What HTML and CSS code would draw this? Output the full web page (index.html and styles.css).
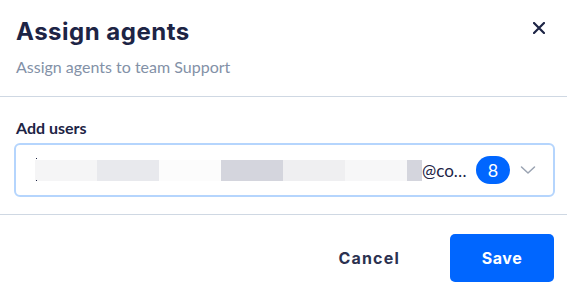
FILE: index.html
```html
<!DOCTYPE html>
<html>
<head>
<meta charset="utf-8">
<link rel="stylesheet" href="styles.css">
</head>
<body>
<div class="modal">
  <div class="header">
    <div class="titles">
      <h1 class="title">Assign agents</h1>
      <p class="subtitle">Assign agents to team Support</p>
    </div>
    <button class="close" aria-label="Close">
      <svg width="12" height="12" viewBox="0 0 12 12"><path d="M1 1 L11 11 M11 1 L1 11" stroke="#1d2445" stroke-width="2.2" stroke-linecap="round"/></svg>
    </button>
  </div>
  <div class="body">
    <label class="label">Add users</label>
    <div class="select">
      <div class="value">
        <span class="caret top"></span><span class="caret bottom"></span>
        <span class="blk b1"></span><span class="blk b2"></span><span class="blk b3"></span><span class="blk b4"></span><span class="blk b5"></span><span class="blk b6"></span><span class="blk b7"></span>
        <span class="tail">@co…</span>
      </div>
      <span class="badge">8</span>
      <svg class="chev" width="16" height="10" viewBox="0 0 16 10"><path d="M1.5 2 L8 8 L14.5 2" fill="none" stroke="#9aa3b2" stroke-width="1.5" stroke-linecap="round" stroke-linejoin="round"/></svg>
    </div>
  </div>
  <div class="footer">
    <button class="btn cancel">Cancel</button>
    <button class="btn save">Save</button>
  </div>
</div>
</body>
</html>
```
FILE: styles.css
```css
* { box-sizing: border-box; }
html, body { margin: 0; padding: 0; background: #fff; }
body { width: 567px; height: 299px; overflow: hidden; }
.modal { width: 567px; }
.header {
  display: flex;
  justify-content: space-between;
  align-items: flex-start;
  padding: 16px 16px 0 16px;
  height: 97px;
  border-bottom: 1px solid #cfd8e3;
}
.title {
  margin: 0;
  font-family: "Inter", sans-serif;
  font-weight: 700;
  font-size: 24px;
  line-height: 32px;
  color: #1d2445;
  letter-spacing: 0.5px;
}
.subtitle {
  margin: 9px 0 0 0;
  font-family: "Lato", sans-serif;
  font-size: 16px;
  line-height: 20px;
  color: #8391a7;
}
.close {
  border: 0;
  background: none;
  padding: 0;
  margin: 6px 6px 0 0;
  width: 12px;
  height: 12px;
  display: flex;
}
.body {
  padding: 21px 12px 0 14px;
  height: 118px;
  border-bottom: 1px solid #cfd8e3;
}
.label {
  display: block;
  margin-left: 2px;
  font-family: "Lato", sans-serif;
  font-weight: 700;
  font-size: 16px;
  line-height: 20px;
  color: #1d2445;
}
.select {
  margin-top: 5px;
  height: 54px;
  border: 2px solid #b5d5fd;
  border-radius: 6px;
  display: flex;
  align-items: center;
  padding: 0 17px 0 19px;
}
.value {
  position: relative;
  display: flex;
  align-items: center;
  flex: 1;
  height: 22px;
}
.blk { display: block; width: 62px; height: 21px; }
.b1 { background: #f5f5f6; }
.b2 { background: #e8e9ed; }
.b3 { background: #fcfcfc; }
.b4 { background: #d4d5dd; }
.b5 { background: #efeff1; }
.b6 { background: #f7f7f8; }
.b7 { background: #d4d5dd; width: 15px; }
.caret { position: absolute; left: 1px; width: 1px; height: 1px; background: #1d2445; }
.caret.top { top: -1px; }
.caret.bottom { bottom: 0; }
.tail {
  font-family: "Lato", sans-serif;
  font-size: 17px;
  color: #1d2445;
}
.badge {
  width: 34px;
  height: 28px;
  border-radius: 14px;
  background: #0066ff;
  color: #fff;
  font-family: "Lato", sans-serif;
  font-size: 18px;
  display: flex;
  align-items: center;
  justify-content: center;
  margin-right: 10px;
}
.chev { display: block; }
.footer {
  display: flex;
  justify-content: flex-end;
  align-items: center;
  padding: 19px 13px 0 0;
}
.btn {
  font-family: "Inter", sans-serif;
  font-weight: 700;
  font-size: 16px;
  border: 0;
  cursor: pointer;
}
.cancel {
  background: none;
  color: #2b3150;
  padding: 0;
  height: 48px;
  margin-right: 50px;
  letter-spacing: 1.2px;
}
.save {
  background: #0066ff;
  color: #fff;
  width: 104px;
  height: 48px;
  border-radius: 5px;
  letter-spacing: 0.6px;
}
```
